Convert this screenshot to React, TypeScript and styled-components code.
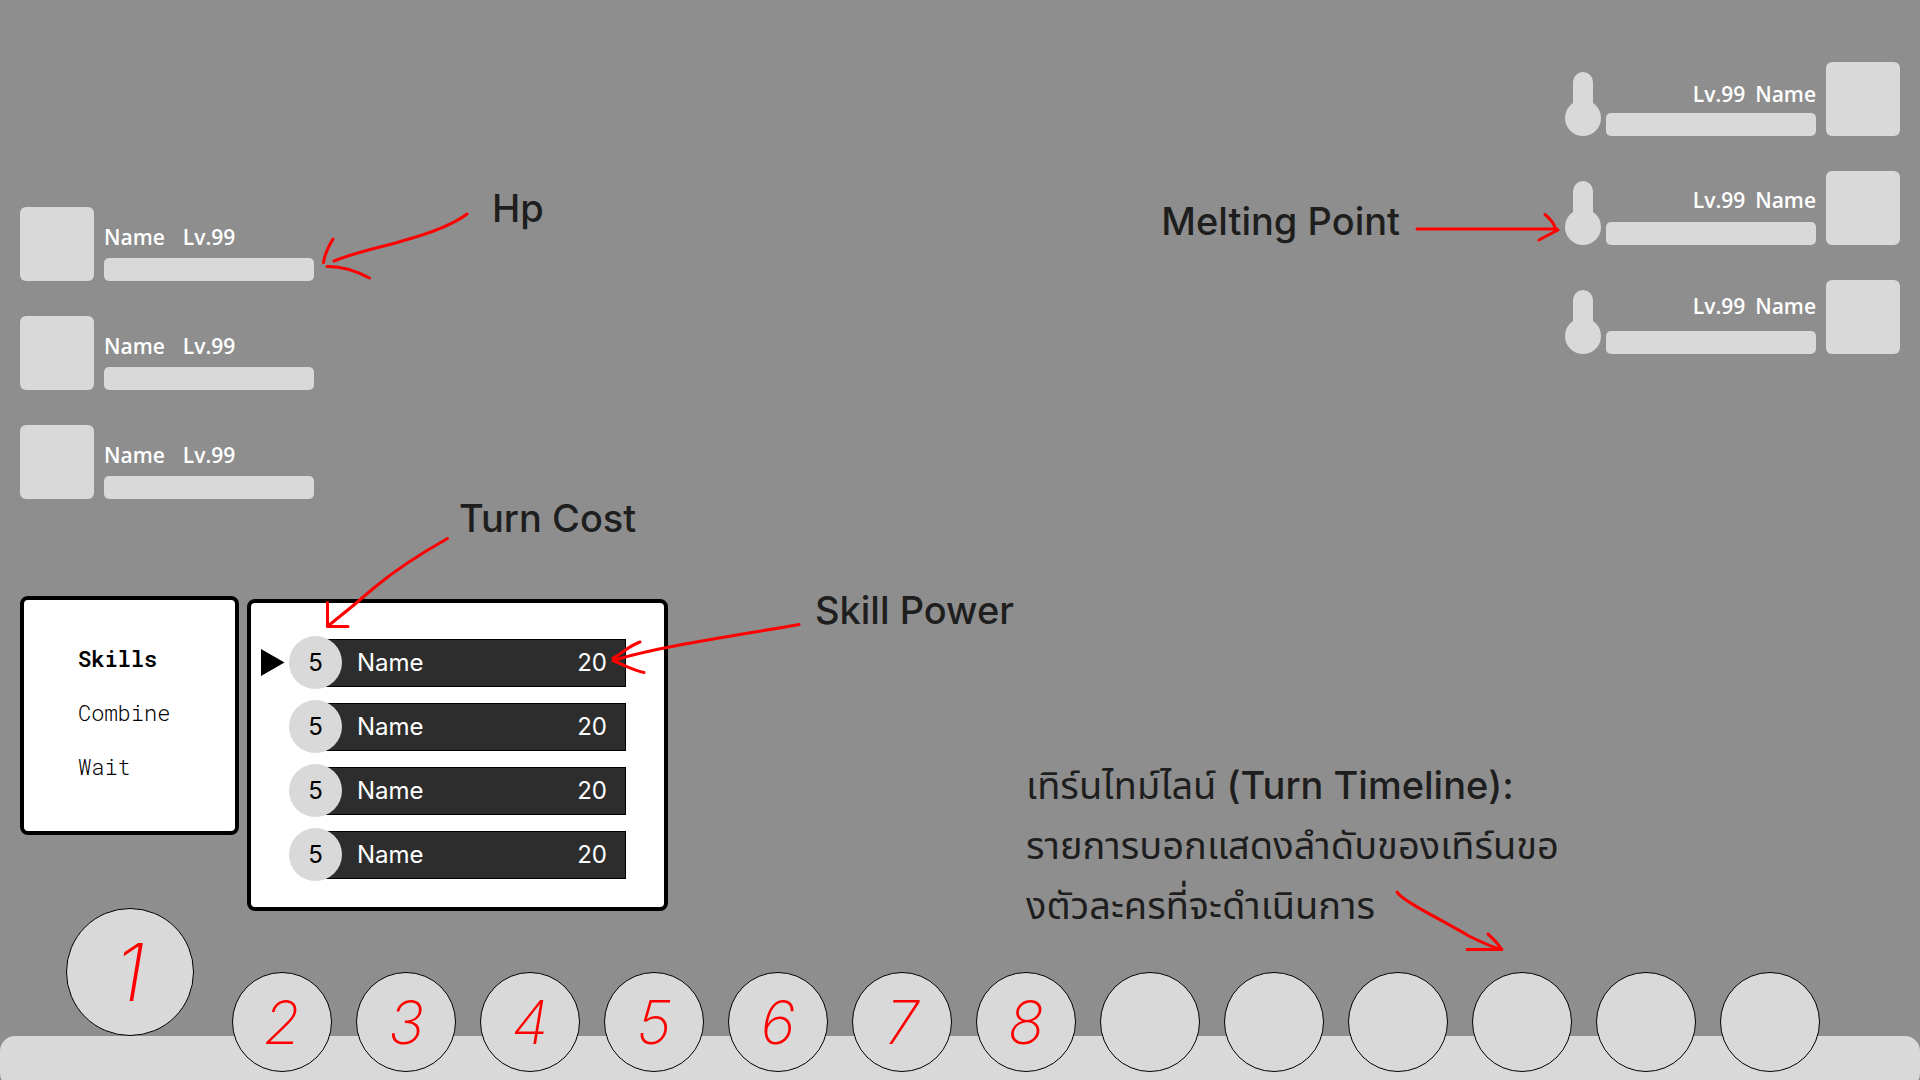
import React from "react";
import styled, { createGlobalStyle } from "styled-components";

const GlobalStyle = createGlobalStyle`
  *, *::before, *::after { box-sizing: border-box; }
  body { margin: 0; background: #8e8e8e; }
  h2, p, ul, ol { margin: 0; padding: 0; font-weight: inherit; }
  ul, ol { list-style: none; }
  button { font: inherit; color: inherit; background: none; border: 0; padding: 0; text-align: left; cursor: pointer; }
`;

const Screen = styled.main`
  position: relative;
  display: flex;
  flex-direction: column;
  justify-content: space-between;
  min-height: 100vh;
  overflow: hidden;
  background: #8e8e8e;
  font-family: Inter, "Liberation Sans", sans-serif;
`;

const Field = styled.div`
  display: flex;
  justify-content: space-between;
  align-items: flex-start;
  padding: 0 20px;
`;

const PlayerSide = styled.div`
  display: flex;
  flex-direction: column;
  gap: 97px;
  padding-top: 207px;
`;

const Party = styled.ul`
  display: flex;
  flex-direction: column;
  gap: 35px;
`;

const EnemyParty = styled(Party)`
  padding-top: 62px;
`;

const Unit = styled.li`
  display: flex;
  align-items: flex-end;
  gap: 10px;
`;

const Portrait = styled.div`
  width: 74px;
  height: 74px;
  border-radius: 6px;
  background: #d9d9d9;
`;

const Stats = styled.div<{ $gap: number }>`
  display: flex;
  flex-direction: column;
  gap: ${(p) => p.$gap}px;
`;

const Label = styled.div<{ $end?: boolean }>`
  display: flex;
  justify-content: ${(p) => (p.$end ? "flex-end" : "flex-start")};
  gap: ${(p) => (p.$end ? 10 : 18)}px;
  color: #fff;
  font: 600 21px/24px "Open Sans", "Noto Sans", sans-serif;
`;

const Meters = styled.div`
  display: flex;
  align-items: flex-end;
  gap: 5px;
`;

const Bar = styled.div`
  width: 210px;
  height: 23px;
  border-radius: 5px;
  background: #d9d9d9;
`;

const Commands = styled.div`
  display: flex;
  align-items: flex-start;
  gap: 8px;
`;

const Panel = styled.section`
  border: 4px solid #000;
  border-radius: 8px;
  background: #fff;
`;

const Menu = styled(Panel)`
  display: flex;
  flex-direction: column;
  align-items: flex-start;
  gap: 30px;
  width: 219px;
  padding: 47px 0 52px 54px;
`;

const MenuItem = styled.button<{ $active?: boolean }>`
  && {
    font: ${(p) => (p.$active ? 600 : 300)} 22px/24px "Roboto Mono", "Noto Sans Mono", "Liberation Mono", monospace;
    color: #000;
  }
`;

const SkillPanel = styled(Panel)`
  width: 421px;
  margin-top: 3px;
  padding: 33px 38px 26px 10px;
`;

const SkillList = styled.ul`
  display: flex;
  flex-direction: column;
  gap: 11px;
`;

const SkillButton = styled.button`
  && {
    display: grid;
    grid-template-columns: 28px 53px 1fr;
    align-items: center;
    width: 100%;
    font-size: 24px;
    line-height: 32px;
  }
`;

const Cursor = styled.span`
  display: flex;
`;

const Cost = styled.span`
  z-index: 1;
  display: grid;
  place-items: center;
  height: 53px;
  border-radius: 50%;
  background: #d9d9d9;
  color: #000;
`;

const SkillBody = styled.span`
  display: flex;
  justify-content: space-between;
  align-items: center;
  height: 48px;
  margin-left: -27px;
  padding: 0 18px 0 41px;
  border: 1px solid #000;
  background: #2d2d2d;
  color: #fff;
`;

const Timeline = styled.section`
  display: grid;
  margin-top: -3px;
`;

const Track = styled.div`
  grid-area: 1 / 1;
  align-self: end;
  height: 52px;
  margin-bottom: -8px;
  border-radius: 15px;
  background: #d9d9d9;
`;

const Turns = styled.ol`
  grid-area: 1 / 1;
  z-index: 1;
  display: flex;
  align-items: flex-start;
  gap: 24px;
  padding: 0 66px 8px;
`;

const Turn = styled.li<{ $current?: boolean }>`
  display: grid;
  place-items: center;
  flex: none;
  width: ${(p) => (p.$current ? 128 : 100)}px;
  height: ${(p) => (p.$current ? 128 : 100)}px;
  margin: ${(p) => (p.$current ? "0 14px 0 0" : "64px 0 0")};
  border: 1px solid #000;
  border-radius: 50%;
  background: #d9d9d9;
  color: #f00;
  font: italic 200 ${(p) => (p.$current ? 80 : 60)}px/1 Inter, sans-serif;
`;

type Place = { $left?: number; $right?: number; $top: number };

const side = (p: Place) =>
  p.$right === undefined ? `left: ${p.$left}px;` : `right: ${p.$right}px;`;

const Note = styled.p<Place>`
  position: absolute;
  z-index: 2;
  ${side}
  top: ${(p) => p.$top}px;
  color: #1e1e1e;
  font-size: 38px;
  font-weight: 500;
  line-height: 60px;
  white-space: nowrap;
`;

const Thai = styled.span`
  font-family: "Noto Sans Thai", Inter, sans-serif;
  font-weight: 400;
  line-height: 1;
`;

const Ink = styled.svg<Place>`
  position: absolute;
  z-index: 3;
  ${side}
  top: ${(p) => p.$top}px;
  fill: none;
  stroke: #f00;
  stroke-width: 3px;
  stroke-linecap: round;
  stroke-linejoin: round;
  pointer-events: none;
`;

const Thermometer = () => (
  <svg width="36" height="64" viewBox="0 0 36 64" fill="#d9d9d9" aria-label="Melting point">
    <rect x="8" width="20" height="50" rx="10" />
    <circle cx="18" cy="46" r="18" />
  </svg>
);

const Pointer = () => (
  <svg width="24" height="28" viewBox="0 0 24 28" aria-hidden="true">
    <path d="M0 0 23.5 13.5 0 27Z" />
  </svg>
);

const allies = [0, 1, 2];
const enemies = [{ gap: 7 }, { gap: 10 }, { gap: 13 }];
const skills = [0, 1, 2, 3].map(() => ({ cost: 5, name: "Name", power: 20 }));
const turns = ["1", "2", "3", "4", "5", "6", "7", "8", "", "", "", "", "", ""];

export default function App() {
  return (
    <Screen>
      <GlobalStyle />
      <Field>
        <PlayerSide>
          <Party>
            {allies.map((id) => (
              <Unit key={id}>
                <Portrait />
                <Stats $gap={9}>
                  <Label>
                    <span>Name</span>
                    <span>Lv.99</span>
                  </Label>
                  <Bar />
                </Stats>
              </Unit>
            ))}
          </Party>
          <Commands>
            <Menu>
              <MenuItem $active>Skills</MenuItem>
              <MenuItem>Combine</MenuItem>
              <MenuItem>Wait</MenuItem>
            </Menu>
            <SkillPanel>
              <SkillList>
                {skills.map((skill, i) => (
                  <li key={i}>
                    <SkillButton>
                      <Cursor>{i === 0 && <Pointer />}</Cursor>
                      <Cost>{skill.cost}</Cost>
                      <SkillBody>
                        <span>{skill.name}</span>
                        <span>{skill.power}</span>
                      </SkillBody>
                    </SkillButton>
                  </li>
                ))}
              </SkillList>
            </SkillPanel>
          </Commands>
        </PlayerSide>
        <EnemyParty>
          {enemies.map((enemy, i) => (
            <Unit key={i}>
              <Meters>
                <Thermometer />
                <Stats $gap={enemy.gap}>
                  <Label $end>
                    <span>Lv.99</span>
                    <span>Name</span>
                  </Label>
                  <Bar />
                </Stats>
              </Meters>
              <Portrait />
            </Unit>
          ))}
        </EnemyParty>
      </Field>

      <Timeline>
        <Track />
        <Turns>
          {turns.map((turn, i) => (
            <Turn key={i} $current={i === 0}>
              {turn}
            </Turn>
          ))}
        </Turns>
      </Timeline>

      <Note $left={492} $top={178}>Hp</Note>
      <Ink $left={320} $top={210} width="150" height="72" viewBox="320 210 150 72">
        <path d="M467 214C450 227 424 235 402 241C379 248 356 252 334 261M333 239Q325 252 323.5 262.500M327 266.500Q347 266 369.500 278" />
      </Ink>

      <Note $right={520} $top={191}>Melting Point</Note>
      <Ink $right={360} $top={210} width="145" height="34" viewBox="1415 210 145 34">
        <path d="M1417 229H1557M1545 214.500Q1554 222 1555.500 229M1558 230Q1550 234 1539 240" />
      </Ink>

      <Note $left={459} $top={488}>Turn Cost</Note>
      <Ink $left={324} $top={536} width="126" height="94" viewBox="324 536 126 94">
        <path d="M447.500 538.500Q404 563 375 587Q352 607 328 626M327.500 602.500V626.500H348" />
      </Ink>

      <Note $left={815} $top={580}>Skill Power</Note>
      <Ink $left={610} $top={620} width="192" height="56" viewBox="610 620 192 56">
        <path d="M799 624.500C740 635 660 646 613 660.500M640 642C628 646 622 654 613 658M613 660.500C624 665 632 670 644 672.500" />
      </Ink>

      <Note $left={1026} $top={755}>
        <Thai>เทิร์นไทม์ไลน์</Thai> (Turn Timeline):
        <br />
        <Thai>รายการบอกแสดงลำดับของเทิร์นขอ</Thai>
        <br />
        <Thai>งตัวละครที่จะดำเนินการ</Thai>
      </Note>
      <Ink $left={1394} $top={888} width="112" height="66" viewBox="1394 888 112 66">
        <path d="M1397 892C1401 900 1438 918 1469 936C1481 942 1492 947 1501 949.500M1488 934Q1496 941 1502 949.500H1467" />
      </Ink>
    </Screen>
  );
}
